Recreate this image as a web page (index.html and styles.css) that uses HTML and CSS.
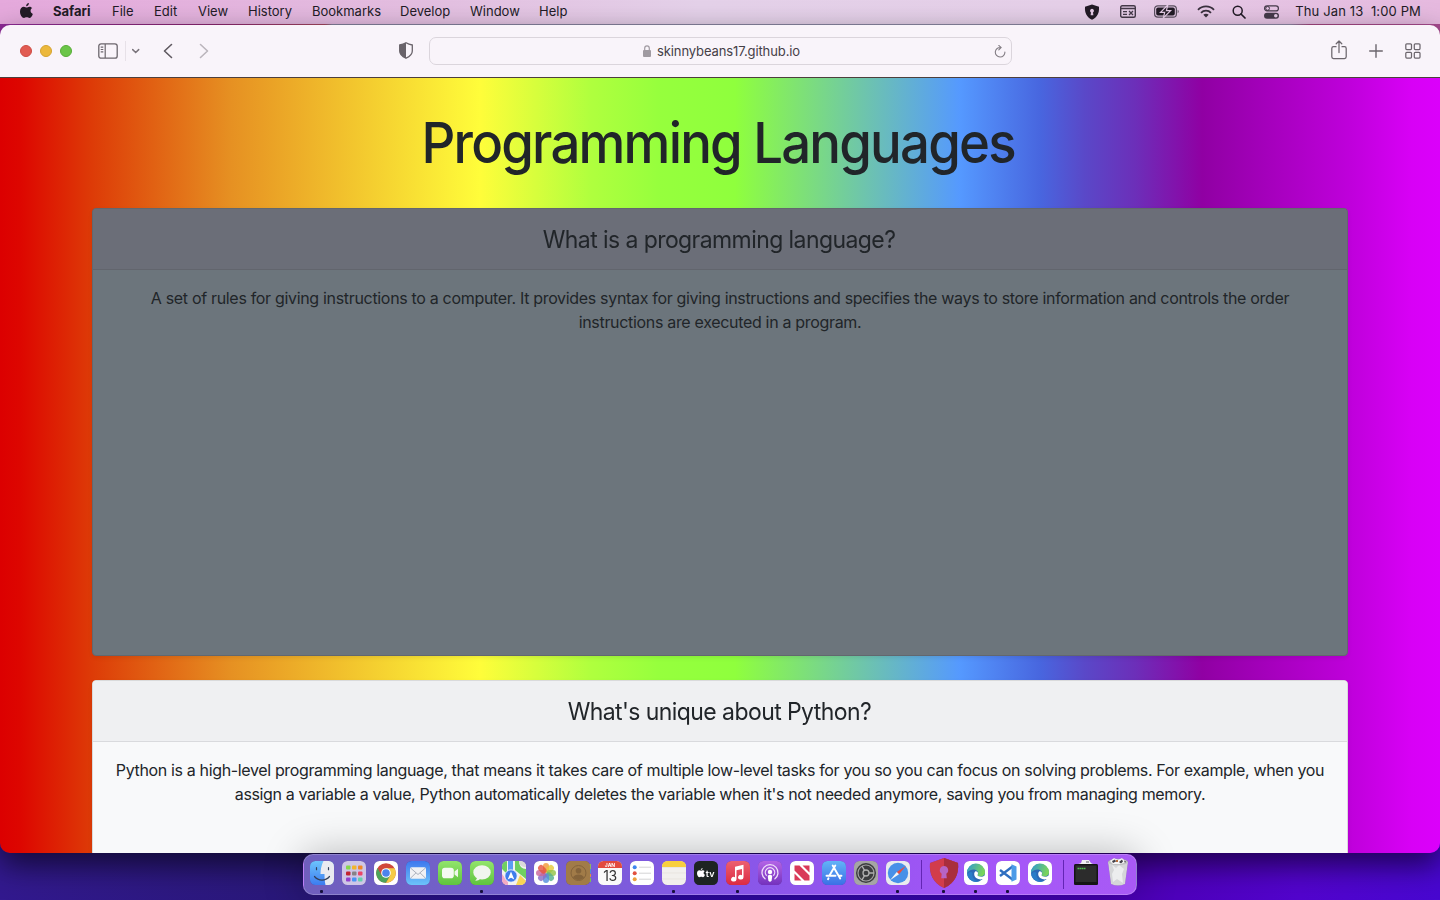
FILE: index.html
```html
<!DOCTYPE html>
<html lang="en">
<head>
<meta charset="utf-8">
<title>Programming Languages</title>
<link rel="stylesheet" href="styles.css">
</head>
<body>
<div class="desktop">
  <header class="menubar">
    <svg class="apple" viewBox="0 0 14 17"><path d="M9.600 0c.1 1.900-1.300 3.500-3 3.500C6.500 1.800 8 .2 9.600 0zM7.100 4.700c.6 0 1.700-.9 3.100-.9 1.300 0 2.400.7 3 1.600-2.700 1.500-2.200 5.200.6 6.200-.6 1.900-2.100 4.400-3.700 4.400-1.100 0-1.500-.7-2.900-.7s-1.800.7-2.900.7C2.200 16 0 12.500 0 9c0-3.400 2.100-5.200 4.100-5.200 1.300 0 2.400.9 3 .9z"/></svg>
    <nav class="menus">
      <b>Safari</b><span>File</span><span>Edit</span><span>View</span><span>History</span><span>Bookmarks</span><span>Develop</span><span>Window</span><span>Help</span>
    </nav>
    <div class="status">
      <svg width="16" height="16" viewBox="0 0 16 16"><path fill="#221b26" d="M8 .5l7 2.300c.4 6-1.500 10.500-7 13C2.500 13.300.6 8.800 1 2.800z"/><path fill="#e5cbe6" d="M8 4.700a2 2 0 0 1 1 3.700l.4 2.800H6.600L7 8.400a2 2 0 0 1 1-3.700z"/></svg>
      <svg width="16" height="13" viewBox="0 0 16 13"><rect x=".7" y=".7" width="14.600" height="11.600" rx="1.500" fill="none" stroke="#453a4a" stroke-width="1.400"/><path stroke="#453a4a" stroke-width="1.300" d="M1 3.500h14M3 6.700h4M3 9.300h4M9 6l4 4M13 6L9 10"/></svg>
      <svg width="26" height="13" viewBox="0 0 26 13"><rect x=".6" y=".8" width="21.800" height="11.400" rx="3.200" fill="none" stroke="#5b5060" stroke-width="1.200"/><rect x="2.200" y="2.400" width="18.600" height="8.200" rx="1.800" fill="#221b26"/><path fill="#6b606f" d="M23.600 4.700c1.600.6 1.600 3 0 3.600z"/><path fill="#221b26" stroke="#e5cbe6" stroke-width="1.200" d="M13.800 0L6.500 7.300h4.200L9.300 13l7.300-7.300h-4.200z"/></svg>
      <svg width="18" height="13" viewBox="0 0 18 13"><g fill="none" stroke="#3a303e" stroke-width="1.800"><path d="M1 4.800c4.400-4.600 11.600-4.600 16 0M4 7.800c2.800-2.900 7.200-2.900 10 0"/></g><path fill="#3a303e" d="M6.300 9.800c1.500-1.500 3.900-1.500 5.400 0L9 12.600z"/></svg>
      <svg width="14" height="14" viewBox="0 0 14 14"><circle cx="5.700" cy="5.700" r="4.500" fill="none" stroke="#221b26" stroke-width="1.500"/><path d="M9 9l4 4" stroke="#221b26" stroke-width="1.700" stroke-linecap="round"/></svg>
      <svg width="15" height="14" viewBox="0 0 15 14"><rect x=".6" y=".9" width="13.800" height="5" rx="2.500" fill="none" stroke="#453a4a" stroke-width="1.200"/><circle cx="3.600" cy="3.400" r="1.900" fill="none" stroke="#453a4a"/><rect y="7.700" width="15" height="6" rx="3" fill="#453a4a"/><circle cx="11.800" cy="10.700" r="1.800" fill="#e5cbe6"/></svg>
      <span class="clock">Thu Jan 13&nbsp; 1:00 PM</span>
    </div>
  </header>

  <main class="window">
    <div class="toolbar">
      <div class="lights"><i class="red"></i><i class="amber"></i><i class="green"></i></div>
      <svg class="sidebar" width="20" height="16" viewBox="0 0 20 16"><rect x=".8" y=".8" width="18.400" height="14.400" rx="2.300" fill="none" stroke="#6c666d" stroke-width="1.300"/><path stroke="#6c666d" stroke-width="1.200" d="M7.200 1v14M2.700 4.200h2.600M2.700 6.500h2.600M2.700 8.800h2.600"/></svg>
      <svg class="chev" width="15" height="20" viewBox="0 0 15 20"><path stroke="#e7e1e8" d="M.5 0v20"/><path fill="none" stroke="#7b757c" stroke-width="1.500" stroke-linecap="round" d="M7.700 8.600l3 2.900 3-2.900"/></svg>
      <svg class="back" width="10" height="16" viewBox="0 0 10 16"><path fill="none" stroke="#5f5960" stroke-width="1.600" stroke-linecap="round" stroke-linejoin="round" d="M8.500 1.500L1.500 8l7 6.500"/></svg>
      <svg class="fwd" width="10" height="16" viewBox="0 0 10 16"><path fill="none" stroke="#bbb5bc" stroke-width="1.600" stroke-linecap="round" stroke-linejoin="round" d="M1.500 1.500l7 6.500-7 6.500"/></svg>
      <svg class="privacy" width="14" height="17" viewBox="0 0 14 17"><path fill="none" stroke="#69636a" stroke-width="1.300" d="M7 .8c2 1.300 3.800 1.900 6.300 2.200v6c0 3.600-2.800 5.600-6.300 7.200C3.500 14.600.7 12.600.7 9V3C3.200 2.700 5 2.100 7 .8z"/><path fill="#69636a" d="M7 .8v15.400C3.500 14.600.7 12.600.7 9V3C3.200 2.700 5 2.100 7 .8z"/></svg>
      <div class="address">
        <svg width="8" height="12" viewBox="0 0 8 12"><rect y="5" width="8" height="7" rx="1" fill="#a09aa1"/><path fill="none" stroke="#a09aa1" stroke-width="1.200" d="M1.700 5.500V3.200a2.300 2.300 0 0 1 4.600 0v2.300"/></svg>
        <span>skinnybeans17.github.io</span>
        <svg class="reload" width="12" height="13" viewBox="0 0 12 13"><path fill="none" stroke="#837d84" stroke-linecap="round" stroke-width="1.100" d="M6.800 2.500A4.800 4.800 0 1 0 10.900 7M4.800.4l2.300 2.100-2.300 2.300"/></svg>
      </div>
      <div class="actions">
        <svg class="share" width="16" height="20" viewBox="0 0 16 20"><path fill="none" stroke="#6c666d" stroke-width="1.250" stroke-linecap="round" stroke-linejoin="round" d="M5 6.700H2.500Q.8 6.700.8 8.400v8.400q0 1.700 1.700 1.700h11q1.700 0 1.700-1.700V8.400q0-1.700-1.700-1.700H11M8 12.500V1.200M5.200 3.800L8 1l2.800 2.800"/></svg>
        <svg width="14" height="14" viewBox="0 0 14 14"><path stroke="#6c666d" stroke-width="1.400" stroke-linecap="round" d="M7 .7v12.600M.7 7h12.600"/></svg>
        <svg width="16" height="16" viewBox="0 0 16 16"><g fill="none" stroke="#6c666d" stroke-width="1.250"><rect x=".8" y=".8" width="5.700" height="5.700" rx="1"/><rect x="9.300" y=".8" width="5.700" height="5.700" rx="1"/><rect x=".8" y="9.300" width="5.700" height="5.700" rx="1"/><rect x="9.300" y="9.300" width="5.700" height="5.700" rx="1"/></g></svg>
      </div>
    </div>

    <div class="page">
      <h1><span>Programming Languages</span></h1>
      <section class="card card-dark">
        <h2><span>What is a programming language?</span></h2>
        <p>A set of rules for giving instructions to a computer. It provides syntax for giving instructions and specifies the ways to store information and controls the order<br>instructions are executed in a program.</p>
      </section>
      <section class="card card-light">
        <h2><span>What's unique about Python?</span></h2>
        <p>Python is a high-level programming language, that means it takes care of multiple low-level tasks for you so you can focus on solving problems. For example, when you<br><span class="tight">assign a variable a value, Python automatically deletes the variable when it's not needed anymore, saving you from managing memory.</span></p>
      </section>
    </div>
  </main>

  <footer class="dock">
    <div class="app running"><svg viewBox="0 0 24 24"><defs><clipPath id="tile"><rect width="24" height="24" rx="5.500"/></clipPath><linearGradient id="blue" x2="0" y2="1"><stop stop-color="#6cc4fc"/><stop offset="1" stop-color="#3d7cf0"/></linearGradient></defs><g clip-path="url(#tile)"><path fill="url(#blue)" d="M0 0h24v24H0z"/><path fill="#e9eaf0" d="M13.500 0c-2 4-3 8-3 13h4c0 4 .3 8 1 11H24V0z"/></g><path fill="none" stroke="#33405a" stroke-linecap="round" stroke-width="1.200" d="M6.500 6.700v2M18.500 6.700v2M4.500 15.500c4 4.800 11 4.800 15 0"/></svg></div>
    <div class="app"><svg viewBox="0 0 24 24"><rect width="24" height="24" rx="5.500" fill="#cec6e6"/><g><rect x="4" y="4.500" width="4.500" height="4" rx="1" fill="#85d84c"/><rect x="10" y="4.500" width="4.500" height="4" rx="1" fill="#f2b52c"/><rect x="16" y="4.500" width="4.500" height="4" rx="1" fill="#f08827"/><rect x="4" y="10.500" width="4.500" height="4" rx="1" fill="#c22431"/><rect x="10" y="10.500" width="4.500" height="4" rx="1" fill="#858387"/><rect x="16" y="10.500" width="4.500" height="4" rx="1" fill="#ec4567"/><rect x="4" y="16.500" width="4.500" height="4" rx="1" fill="#9240ce"/><rect x="10" y="16.500" width="4.500" height="4" rx="1" fill="#4994f5"/><rect x="16" y="16.500" width="4.500" height="4" rx="1" fill="#66cfac"/></g></svg></div>
    <div class="app"><svg viewBox="0 0 24 24"><rect width="24" height="24" rx="5.500" fill="#fff"/><circle cx="12" cy="12" r="9.800" fill="#d0483b"/><path fill="#4da35a" d="M3.500 7.100L7.700 14.400l8.600.1-4.300 7.300A9.800 9.800 0 0 1 3.500 7.100z"/><path fill="#f5cb45" d="M12 7.200h8.500A9.800 9.800 0 0 1 12 21.800l4.300-7.300z"/><circle cx="12" cy="12" r="4.800" fill="#fff"/><circle cx="12" cy="12" r="3.800" fill="#4d83ec"/></svg></div>
    <div class="app"><svg viewBox="0 0 24 24"><defs><linearGradient id="mail" x2="0" y2="1"><stop stop-color="#3e78ee"/><stop offset="1" stop-color="#6cc3fa"/></linearGradient></defs><rect width="24" height="24" rx="5.500" fill="url(#mail)"/><rect x="4" y="6.300" width="16" height="11.400" rx="1.700" fill="#f0f1f4"/><path fill="none" stroke="#a0a8b4" stroke-width=".9" d="M4.500 7l7.500 6.500L19.500 7M4.700 17l5.300-5.200M19.300 17L14 11.800"/></svg></div>
    <div class="app"><svg viewBox="0 0 24 24"><defs><linearGradient id="green" x2="0" y2="1"><stop stop-color="#92e46c"/><stop offset="1" stop-color="#5fc43e"/></linearGradient></defs><rect width="24" height="24" rx="5.500" fill="url(#green)"/><rect x="4" y="6.700" width="11.800" height="10.600" rx="2.800" fill="#f5faf2"/><path fill="#f0f7ec" d="M16.500 10.500L20 7.700v8.600l-3.500-2.800z"/></svg></div>
    <div class="app running"><svg viewBox="0 0 24 24"><rect width="24" height="24" rx="5.500" fill="url(#green)"/><ellipse cx="12" cy="11.400" rx="8.700" ry="7.200" fill="#f1f5ef"/><path fill="#f1f5ef" d="M7 16c.1 2-.9 3-1.800 3.700 2.400.1 4-.8 5-2z"/></svg></div>
    <div class="app"><svg viewBox="0 0 24 24"><g clip-path="url(#tile)"><path fill="#f3f2ef" d="M0 0h24v24H0z"/><path fill="#70cf61" d="M0 0h5v13L0 8zM13 0h4c0 5 3 8 7 8v10L13 9z"/><path fill="#dad8da" d="M17 0h7v6c-4 0-7-2-7-6z"/><path fill="#f3aac3" d="M0 13l6 8v3H0z"/><path fill="#f8d454" d="M14 24l4-10 6 6v4z"/><path fill="#5c9cf5" d="M6 0h5v10H6z"/></g><circle cx="9" cy="15" r="6.200" fill="#3f7cec" stroke="#fff" stroke-width=".8"/><path fill="#fff" d="M9 10.500l3.300 8L9 16.700l-3.300 1.800z"/></svg></div>
    <div class="app"><svg viewBox="0 0 24 24"><rect width="24" height="24" rx="5.500" fill="#fff"/><g class="petals"><rect x="9" y="2" width="6" height="9.500" rx="3" fill="#f39a3a"/><rect x="9" y="2" width="6" height="9.500" rx="3" fill="#e6cb3c" transform="rotate(45 12 12)"/><rect x="9" y="2" width="6" height="9.500" rx="3" fill="#94c34a" transform="rotate(90 12 12)"/><rect x="9" y="2" width="6" height="9.500" rx="3" fill="#57b08f" transform="rotate(135 12 12)"/><rect x="9" y="2" width="6" height="9.500" rx="3" fill="#5590dc" transform="rotate(180 12 12)"/><rect x="9" y="2" width="6" height="9.500" rx="3" fill="#8a6cc6" transform="rotate(225 12 12)"/><rect x="9" y="2" width="6" height="9.500" rx="3" fill="#c9669a" transform="rotate(270 12 12)"/><rect x="9" y="2" width="6" height="9.500" rx="3" fill="#e6543f" transform="rotate(315 12 12)"/></g></svg></div>
    <div class="app"><svg viewBox="0 0 24 24"><path fill="#8fb562" d="M20 3h5v5h-5z"/><path fill="#4c91d6" d="M20 8h5v4h-5z"/><path fill="#e0933f" d="M20 13h5v3h-5z"/><path fill="#7dbc55" d="M20 17h5v4h-5z"/><rect width="24" height="24" rx="5" fill="#a17b48"/><circle cx="12.500" cy="12" r="7.500" fill="none" stroke="#84633a"/><circle cx="12.500" cy="9.700" r="2.800" fill="#84633a"/><path fill="#84633a" d="M7 16.500c1.500-4 9.500-4 11 0-2.500 3.300-8.500 3.300-11 0z"/></svg></div>
    <div class="app"><svg viewBox="0 0 24 24"><g clip-path="url(#tile)"><path fill="#fafafa" d="M0 0h24v24H0z"/><path fill="#e2493f" d="M0 0h24v7H0z"/></g><text x="12" y="5.800" class="cal-month">JAN</text><text x="12" y="20" class="cal-day">13</text></svg></div>
    <div class="app"><svg viewBox="0 0 24 24"><rect width="24" height="24" rx="5.500" fill="#fff"/><path stroke="#d4d4d6" d="M9 6.200h12M9 12.200h12M9 18.200h12"/><circle cx="4.700" cy="6.200" r="2" fill="#3f86ee"/><circle cx="4.700" cy="12.200" r="2" fill="#e2513f"/><circle cx="4.700" cy="18.200" r="2" fill="#eda03c"/></svg></div>
    <div class="app running"><svg viewBox="0 0 24 24"><g clip-path="url(#tile)"><path fill="#f2f0ed" d="M0 0h24v24H0z"/><path fill="#f8cf3e" d="M0 0h24v6H0z"/><path stroke="#e2dfd9" stroke-width=".6" d="M0 6.500h24M0 12h24M0 18h24"/></g></svg></div>
    <div class="app"><svg viewBox="0 0 24 24"><rect width="24" height="24" rx="5.500" fill="#1d2422"/><g transform="translate(3 7) scale(.58)" fill="#fff"><path d="M9.600 0c.1 1.900-1.300 3.500-3 3.500C6.500 1.800 8 .2 9.600 0zM7.100 4.700c.6 0 1.700-.9 3.100-.9 1.300 0 2.400.7 3 1.600-2.700 1.500-2.200 5.200.6 6.200-.6 1.900-2.100 4.400-3.700 4.400-1.100 0-1.500-.7-2.900-.7s-1.800.7-2.900.7C2.200 16 0 12.500 0 9c0-3.400 2.100-5.200 4.100-5.200 1.300 0 2.400.9 3 .9z"/></g><text x="16.200" y="15.800" class="tv">tv</text></svg></div>
    <div class="app running"><svg viewBox="0 0 24 24"><defs><linearGradient id="music" x2="0" y2="1"><stop stop-color="#ec6070"/><stop offset="1" stop-color="#dc2b42"/></linearGradient></defs><rect width="24" height="24" rx="5.500" fill="url(#music)"/><path fill="#fff" d="M9 5.800l8.500-2v12.400a2.700 2.300 0 1 1-1.500-2V8l-5.500 1.300v9a2.700 2.300 0 1 1-1.500-2.100z"/></svg></div>
    <div class="app"><svg viewBox="0 0 24 24"><defs><linearGradient id="pod" x2="0" y2="1"><stop stop-color="#b464e6"/><stop offset="1" stop-color="#7431bd"/></linearGradient></defs><rect width="24" height="24" rx="5.500" fill="url(#pod)"/><g fill="none" stroke="#f0dffb" stroke-width="1.300"><path d="M7.500 18.300a8 8 0 1 1 9 0M8.600 14.700a4.700 4.700 0 1 1 6.800 0"/></g><circle cx="12" cy="11" r="2.200" fill="#fff"/><path fill="#fff" d="M9.700 14.700q2.300-1.700 4.600 0l-.7 5q-1.600 2-3.200 0z"/></svg></div>
    <div class="app"><svg viewBox="0 0 24 24"><rect width="24" height="24" rx="5.500" fill="#fff"/><path fill="#d93a59" d="M4.500 4.500h5l10 10v5h-5l-10-10zM12.500 4.500h7v7zM4.500 12.500v7h7z"/></svg></div>
    <div class="app"><svg viewBox="0 0 24 24"><defs><linearGradient id="store" x2="0" y2="1"><stop stop-color="#62b4f7"/><stop offset="1" stop-color="#3b6fe6"/></linearGradient></defs><rect width="24" height="24" rx="5.500" fill="url(#store)"/><path fill="none" stroke="#fff" stroke-width="1.900" stroke-linecap="round" d="M10.700 4.500l7.500 13M13.300 4.500l-6 10.300M4.500 14.800h9M17 14.800h2.500M6.500 17.300l-.5.900"/></svg></div>
    <div class="app"><svg viewBox="0 0 24 24"><rect width="24" height="24" rx="5.500" fill="#a5a5a4"/><circle cx="12" cy="12" r="10" fill="#3b3c3e"/><circle cx="12" cy="12" r="8" fill="none" stroke="#a2a2a2" stroke-width="1.200"/><circle cx="12" cy="12" r="3" fill="none" stroke="#b0b0b0" stroke-width="1.300"/><path stroke="#b0b0b0" stroke-width="1.400" d="M15 12h5M10.500 9.400L8 5M10.500 14.600L8 19"/></svg></div>
    <div class="app running"><svg viewBox="0 0 24 24"><rect width="24" height="24" rx="5.500" fill="#e9ebef"/><circle cx="12" cy="12" r="10.200" fill="#4790e8"/><path fill="#e94c40" d="M20 4.800l-7 8.400-2.200-2.200z"/><path fill="#f5f5f5" d="M4 19.200l6.800-8.200 2.200 2.200z"/></svg></div>
    <i class="sep"></i>
    <div class="app running"><svg class="guard" viewBox="0 0 30 30"><path fill="#d23c4b" d="M15 0l14 5c1 11-3 20-14 25C4 25 0 16 1 5z"/><path fill="#a92e3c" d="M15 0l14 5c1 11-3 20-14 25z"/><path fill="#b764c4" d="M15 8a4.200 4.200 0 0 1 2.300 7.700l.5 4.500h-5.600l.5-4.500A4.200 4.200 0 0 1 15 8z"/></svg></div>
    <div class="app running"><svg viewBox="0 0 24 24"><defs><linearGradient id="edge" x2="1" y2=".3"><stop stop-color="#2d97d6"/><stop offset="1" stop-color="#78d45d"/></linearGradient><g id="edge-mark"><rect width="24" height="24" rx="5.500" fill="#fff"/><circle cx="12" cy="12" r="9" fill="#2c69b7"/><path fill="url(#edge)" d="M3 12a9 9 0 0 1 18-1c.2 3.500-3 5-6 4.300-2-.5-1-1.300-.8-2.600C14.500 9 8 6 3 12z"/><path fill="#fff" d="M11.700 10.200c1.600 0 2.500 1.200 2.300 2.600-.3 1.300-1 1.800.6 2.500 2.200.9 4.500.4 6-.9l.6 1.600-2 2c-4 1.600-9-1-9-5 0-1.300.7-2.800 1.500-2.800z"/><path fill="#2a7dc8" d="M8.500 12c-1 4 2 8.500 7 8.300-6 2.300-11.500-2-12.200-6.500C4 11 7 10 8.500 12z"/></g></defs><use href="#edge-mark"/></svg></div>
    <div class="app running"><svg viewBox="0 0 24 24"><rect width="24" height="24" rx="5.500" fill="#fff"/><path fill="none" stroke="#2f6fc0" stroke-width="2.400" stroke-linejoin="round" d="M4 9l12.500 9.500M4 15L16.500 5.500"/><path fill="#4b9be8" d="M15.500 3.300l5 2.200v13l-5 2.200z"/></svg></div>
    <div class="app"><svg viewBox="0 0 24 24"><use href="#edge-mark"/></svg></div>
    <i class="sep"></i>
    <div class="app"><svg class="folder" viewBox="0 0 24 26"><path fill="#f1f1f4" d="M4 5l3-1 1-3h7l2 3 2 1v3H4z"/><path fill="#a7a7ae" d="M12 2h3v2h-3z"/><rect y="5" width="24" height="21" rx="1.500" fill="#151515"/><rect x="1.500" y="6.500" width="21" height="16.500" fill="#2c2c2c"/><path stroke="#4fbf52" stroke-width="1.400" stroke-dasharray="1.700 .4" d="M3.500 9.500h8.300"/></svg></div>
    <div class="app"><svg class="trash" viewBox="0 0 22 28"><path fill="#d5d6d8" d="M1 4h20l-3 22q-7 3-14 0z"/><path fill="#f1f2f4" d="M5 7l4 3 3-3 5 4-2 5 1 9-6-4-4 3-1-8 2-4z" opacity=".8"/><ellipse cx="11" cy="4" rx="10" ry="3.200" fill="#bfc0c2"/><path fill="#f6f6f6" d="M3 3l4-3 4 2 4-2 4 4-5 2H6z"/><path fill="#42414a" d="M5 3l3-1.500 1 2-3 1.500zM12 4l3-2.500 1 2-2 2zM17 2.500l2 1-1 1.500z"/><path fill="#b56b3a" d="M9 2h2v2H9z"/></svg></div>
  </footer>
</div>
</body>
</html>
```
FILE: styles.css
```css
* { box-sizing: border-box; }

body {
  margin: 0;
  font-family: Inter, "Liberation Sans", sans-serif;
  color: #212529;
}

svg { display: block; flex: none; }

.desktop {
  display: flex;
  flex-direction: column;
  width: 1440px;
  height: 900px;
  overflow: hidden;
  background:
    linear-gradient(90deg, #8f2b98, #8a2570 215px, #a4465f 325px, #83809c 332px, #8f8aa6 1290px, #a3457f 1310px, #a84b90) 0 0 / 100% 40px no-repeat,
    linear-gradient(90deg, #32198e, #291878 300px, #2c0ca0 600px, #3608b0 900px, #4d00b8 1150px, #5204cd 1300px, #4807d0);
}

.menubar {
  display: flex;
  align-items: center;
  height: 24px;
  flex: none;
  padding: 0 19px 1px 20px;
  background: linear-gradient(90deg, #e5a9dc, #e3bee0 420px, #e4d1e9 700px, #e5cfe8 1080px, #e6b9df);
  font-size: 13px;
  line-height: 16px;
  color: #221b26;
}

.apple { width: 13px; height: 16px; fill: #221b26; margin-top: -1px; }

.menus {
  display: grid;
  grid-template-columns: 59px 42px 44px 50px 64px 88px 70px 69px 40px;
  justify-items: start;
  margin: -1px 0 0 20px;
  flex: 1;
}

.status { display: flex; align-items: center; }
.status svg:nth-child(2) { margin-left: 20px; }
.status svg:nth-child(3) { margin-left: 18px; }
.status svg:nth-child(4) { margin-left: 17px; }
.status svg:nth-child(5) { margin-left: 17.500px; }
.status svg:nth-child(6) { margin-left: 17.500px; }
.clock { margin: -1px 0 0 16.500px; letter-spacing: .13px; white-space: nowrap; }

.window {
  height: 828px;
  flex: none;
  display: flex;
  flex-direction: column;
  margin-top: 1px;
  border-radius: 10px;
  overflow: hidden;
  box-shadow: 0 12px 30px rgba(0, 0, 0, .6);
}

.toolbar {
  display: flex;
  align-items: center;
  height: 53px;
  flex: none;
  padding: 0 19px 0 20px;
  background: #f9f4fa;
  border-bottom: 1px solid #4d3f3c;
}

.lights { display: flex; gap: 8px; }
.lights i { width: 12px; height: 12px; border-radius: 50%; border-width: 1px; border-style: solid; }
.lights .red { background: #e15b52; border-color: #cf4b43; }
.lights .amber { background: #ecb83c; border-color: #d6a32f; }
.lights .green { background: #6bc548; border-color: #57ad37; }

.sidebar { margin: -1px 0 0 26px; }
.chev { margin-left: 7px; }
.back { margin-left: 23px; }
.fwd { margin-left: 26px; }
.privacy { margin: -1px 0 0 190px; }

.address {
  display: flex;
  align-items: center;
  justify-content: center;
  gap: 6px;
  position: relative;
  width: 583px;
  height: 28px;
  margin: -1px 0 0 16px;
  padding: 1px 0 0 2px;
  border: 1px solid #dbd5dc;
  border-radius: 7px;
  font-size: 13px;
  letter-spacing: -.1px;
  color: #454047;
}
.reload { position: absolute; right: 5px; }

.actions { display: flex; align-items: center; gap: 22px; margin: -1px 0 0 auto; }
.share { margin-top: -1px; }

.page {
  flex: 1;
  min-height: 0;
  padding: 32px 92px 0;
  background: linear-gradient(90deg, #dc0000, #dd0600 20px, #dd3b07 92px, #e69022 230px, #fffd3a 480px, #b0ff3e 590px, #96ff3d 660px, #8fff3d 735px, #5599ff 960px, #4866df 1040px, #5a48c8 1085px, #6c2fb9 1135px, #9000a3 1202px, #be00da 1348px, #d800f6 1412px, #db00fb);
}

h1, h2, p { margin: 0; font-weight: 400; text-align: center; white-space: nowrap; }
h1 { font-size: 56px; line-height: 67px; font-weight: 500; letter-spacing: -1.9px; margin: 0 3px 31px 0; }
h1 span { display: inline-block; transform: scaleX(.941); }

.card {
  height: 448px;
  margin-bottom: 24px;
  border: 1px solid rgba(0, 0, 0, .125);
  border-radius: 4px;
  box-shadow: 0 2px 4px rgba(0, 0, 0, .075);
  overflow: hidden;
}
.card-dark { background: #6c757c; border-color: #62676e; }
.card-light { background: #f8f9fa; border-color: #d9dadb; }
.card h2 {
  height: 61px;
  padding: 16px 2px 16px 0;
  font-size: 24px;
  line-height: 29px;
  letter-spacing: -.6px;
  background: #eff0f2;
  border-bottom: 1px solid #d9dadd;
}
.card-dark h2 { background: #6b6e78; border-color: #62656d; }
.card h2 span { display: inline-block; transform: scaleX(.958); }
.card p { padding-top: 16px; font-size: 16px; line-height: 24px; }
.card-dark p { letter-spacing: -.322px; }
.card-light p { letter-spacing: -.353px; }
.card-light .tight { letter-spacing: -.369px; }

.dock {
  display: flex;
  align-items: flex-start;
  align-self: center;
  position: relative;
  width: 834px;
  height: 41px;
  flex: none;
  padding: 6px 1px 0 2px;
  border: 1px solid rgba(255, 255, 255, .22);
  border-radius: 10px;
  background: linear-gradient(90deg, #6f5fbd, #7460cf 220px, #8457e6 400px, #9b55f3 600px, #a557f8 700px, #a85af5);
  box-shadow: 0 0 40px rgba(0, 0, 0, .28);
  margin-top: 1px;
}
.app { position: relative; display: flex; justify-content: center; width: 32px; height: 24px; flex: none; }
.app svg { width: 24px; height: 24px; overflow: visible; filter: drop-shadow(0 .5px .5px rgba(0, 0, 0, .3)); }
.app .guard { width: 30px; height: 30px; margin-top: -3px; }
.app .folder { height: 26px; margin-top: -2px; }
.app .trash { width: 22px; height: 28px; margin-top: -3px; }
.running::after {
  content: "";
  position: absolute;
  left: 14px;
  top: 29px;
  width: 3px;
  height: 3px;
  border-radius: 1px;
  background: #160f3d;
}
.sep { width: 1px; height: 29px; margin: -1px 6.500px 0; flex: none; background: #6325b5; }

.petals rect { opacity: .82; }
.cal-month { font: 700 5px Inter, sans-serif; fill: #fff; text-anchor: middle; }
.cal-day { font: 400 14px Inter, sans-serif; fill: #333; text-anchor: middle; letter-spacing: -.5px; }
.tv { font: 600 9px Inter, sans-serif; fill: #fff; text-anchor: middle; }
```
